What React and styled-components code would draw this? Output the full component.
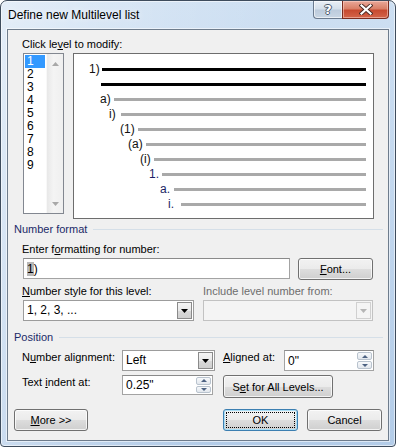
import React from 'react';
import styled, { createGlobalStyle } from 'styled-components';

const levels = [
  { label: '1)', indent: 15, width: 13, dark: true },
  { label: '', indent: 27, width: 0, dark: true },
  { label: 'a)', indent: 26, width: 14 },
  { label: 'i)', indent: 35, width: 12 },
  { label: '(1)', indent: 46, width: 18 },
  { label: '(a)', indent: 54, width: 18 },
  { label: '(i)', indent: 66, width: 14 },
  { label: '1.', indent: 75, width: 13, navy: true },
  { label: 'a.', indent: 86, width: 14, navy: true },
  { label: 'i.', indent: 94, width: 13, navy: true },
];

const ArrowDown = ({ color = '#000' }) => (
  <svg width="7" height="4" viewBox="0 0 7 4"><path d="M0 0h7L3.5 4z" fill={color} /></svg>
);
const ArrowUp = ({ color = '#000' }) => (
  <svg width="7" height="4" viewBox="0 0 7 4"><path d="M0 4h7L3.5 0z" fill={color} /></svg>
);

const Combo = ({ width, disabled, children }) => (
  <ComboBox $w={width} $disabled={disabled}>
    <ComboText>{children}</ComboText>
    <ComboButton $disabled={disabled}>
      <ArrowDown color={disabled ? '#b5b5b5' : '#000'} />
    </ComboButton>
  </ComboBox>
);

const Spin = ({ width, height, children }) => (
  <SpinBox $w={width} $h={height}>
    <FieldText>{children}</FieldText>
    <SpinButtons>
      <SpinButton><SmallArrow $up /></SpinButton>
      <SpinButton><SmallArrow /></SpinButton>
    </SpinButtons>
  </SpinBox>
);

export default function App() {
  return (
    <>
      <GlobalStyle />
      <Frame>
        <TitleBar>
          <Title>Define new Multilevel list</Title>
          <CaptionButtons>
            <HelpButton><HelpGlyph>?</HelpGlyph></HelpButton>
            <CloseButton>
              <svg width="14" height="11" viewBox="0 0 14 11">
                <path d="M2.5 1.5l9 8M11.5 1.5l-9 8" stroke="#4a2a24" strokeWidth="4" strokeLinecap="square" />
                <path d="M2.5 1.5l9 8M11.5 1.5l-9 8" stroke="#fff" strokeWidth="2.2" strokeLinecap="square" />
              </svg>
            </CloseButton>
          </CaptionButtons>
        </TitleBar>

        <Client>
          <Section $top={7}>
            <FieldLabel>Click le<u>v</u>el to modify:</FieldLabel>
            <TopRow>
              <LevelList>
                <LevelItems>
                  {[1, 2, 3, 4, 5, 6, 7, 8, 9].map((n) => (
                    <LevelItem key={n} $selected={n === 1}>{n}</LevelItem>
                  ))}
                </LevelItems>
                <ScrollTrack>
                  <ArrowUp color="#a8a8a8" />
                  <ArrowDown color="#a8a8a8" />
                </ScrollTrack>
              </LevelList>
              <Preview>
                {levels.map((l, i) => (
                  <PreviewRow key={i} $indent={l.indent}>
                    <PreviewLabel $w={l.width} $navy={l.navy}>{l.label}</PreviewLabel>
                    <PreviewLine $dark={l.dark} />
                  </PreviewRow>
                ))}
              </Preview>
            </TopRow>
          </Section>

          <GroupHeader $top={3}>Number format</GroupHeader>
          <Section $top={6}>
            <FieldLabel>Enter f<u>o</u>rmatting for number:</FieldLabel>
            <ControlRow $top={2} $gap={8}>
              <TextField $w={267}>
                <FieldText><Selected>1</Selected>)</FieldText>
              </TextField>
              <Button $w={75} $h={22}><u>F</u>ont...</Button>
            </ControlRow>
            <LabelRow $top={4}>
              <FieldLabel $w={181}><u>N</u>umber style for this level:</FieldLabel>
              <FieldLabel $disabled>Include level number from:</FieldLabel>
            </LabelRow>
            <ControlRow $top={2} $gap={9}>
              <Combo width={171}>1, 2, 3, ...</Combo>
              <Combo width={170} disabled />
            </ControlRow>
          </Section>

          <GroupHeader $top={9}>Position</GroupHeader>
          <Section $top={6}>
            <PositionRow>
              <FieldLabel $w={100}>N<u>u</u>mber alignment:</FieldLabel>
              <Combo width={93}>Left</Combo>
              <FieldLabel $w={61} $left={8}><u>A</u>ligned at:</FieldLabel>
              <Spin width={90} height={21}>0"</Spin>
            </PositionRow>
            <PositionRow $top={4}>
              <FieldLabel $w={100}>Text <u>i</u>ndent at:</FieldLabel>
              <Spin width={91} height={20}>0.25"</Spin>
              <Button $w={110} $h={23} $left={10}>S<u>e</u>t for All Levels...</Button>
            </PositionRow>
          </Section>

          <ButtonBar>
            <Button $w={74} $h={22}><u>M</u>ore &gt;&gt;</Button>
            <Spacer />
            <Button $w={75} $h={22} $default>
              <FocusRect>OK</FocusRect>
            </Button>
            <Button $w={75} $h={22} $left={9}>Cancel</Button>
          </ButtonBar>
        </Client>
      </Frame>
    </>
  );
}

const GlobalStyle = createGlobalStyle`
  html, body { margin:0; padding:0; background:#fff; }
  body { font-family:"Liberation Sans", Arial, sans-serif; font-size:11px; color:#000; }
  u { text-underline-offset:1px; }
`;

const Frame = styled.div`
  width:396px;
  height:447px;
  box-sizing:border-box;
  border:1px solid #3e4c5d;
  border-radius:7px 7px 4px 4px;
  background:
    linear-gradient(100deg, rgba(255,255,255,0.45) 0%, rgba(255,255,255,0.15) 35%, rgba(255,255,255,0) 60%),
    linear-gradient(180deg, #cddff2 0%, #c2d7ee 45%, #b3cce8 100%);
  box-shadow:inset 0 0 0 1px rgba(255,255,255,0.55);
  display:flex;
  flex-direction:column;
  overflow:hidden;
`;

const TitleBar = styled.div`
  height:28px;
  flex-shrink:0;
  display:flex;
  align-items:flex-start;
  padding-left:7px;
`;

const Title = styled.div`
  margin-top:6px;
  font-size:12px;
  line-height:16px;
  color:#000;
  text-shadow:0 0 6px rgba(255,255,255,0.9);
`;

const CaptionButtons = styled.div`
  margin-left:auto;
  margin-right:6px;
  display:flex;
`;

const HelpButton = styled.div`
  width:29px;
  height:18px;
  box-sizing:border-box;
  border:1px solid #6b7b8f;
  border-top:none;
  border-right:none;
  border-radius:0 0 0 4px;
  background:linear-gradient(180deg, #e9eff6 0%, #d4dfeb 48%, #bccbdc 52%, #c9d6e4 100%);
  box-shadow:inset 0 0 0 1px rgba(255,255,255,0.6);
  display:flex;
  align-items:center;
  justify-content:center;
`;

const HelpGlyph = styled.span`
  font-family:"DejaVu Sans", sans-serif;
  font-weight:bold;
  font-size:13px;
  line-height:13px;
  color:#fff;
  text-shadow:1px 0 0 #4b5a6c, -1px 0 0 #4b5a6c, 0 1px 0 #4b5a6c, 0 -1px 0 #4b5a6c;
`;

const CloseButton = styled.div`
  width:47px;
  height:18px;
  box-sizing:border-box;
  border:1px solid #7b2c1f;
  border-top:none;
  border-radius:0 0 4px 0;
  background:linear-gradient(180deg, #e9a899 0%, #d98068 45%, #c74a30 55%, #d4654a 100%);
  box-shadow:inset 0 0 0 1px rgba(255,220,210,0.5);
  display:flex;
  align-items:center;
  justify-content:center;
`;

const Client = styled.div`
  margin:0 6px;
  height:412px;
  box-sizing:border-box;
  border:1px solid #6e7c8c;
  background:#f0f0f0;
  box-shadow:0 0 0 1px rgba(255,255,255,0.55);
  display:flex;
  flex-direction:column;
`;

const Section = styled.div`
  margin-top:${(p) => p.$top || 0}px;
  padding-left:14px;
  display:flex;
  flex-direction:column;
`;

const FieldLabel = styled.div`
  width:${(p) => (p.$w ? `${p.$w}px` : 'auto')};
  margin-left:${(p) => p.$left || 0}px;
  flex-shrink:0;
  line-height:14px;
  height:14px;
  white-space:nowrap;
  color:${(p) => (p.$disabled ? '#6d6d6d' : '#000')};
`;

const TopRow = styled.div`
  margin-top:2px;
  margin-left:1px;
  display:flex;
  align-items:flex-start;
  gap:9px;
`;

const LevelList = styled.div`
  width:41px;
  height:161px;
  box-sizing:border-box;
  border:1px solid #828790;
  background:#fff;
  display:flex;
`;

const LevelItems = styled.div`
  width:20px;
  margin-left:1px;
  padding-top:1px;
  display:flex;
  flex-direction:column;
`;

const LevelItem = styled.div`
  height:13px;
  line-height:13px;
  padding-left:2px;
  font-size:12px;
  background:${(p) => (p.$selected ? '#3399ff' : 'transparent')};
  color:${(p) => (p.$selected ? '#fff' : '#000')};
`;

const ScrollTrack = styled.div`
  width:17px;
  margin-left:1px;
  box-sizing:border-box;
  background:linear-gradient(90deg, #e8e8e8 0%, #f4f4f4 40%, #efefef 100%);
  border-left:1px solid #f8f8f8;
  display:flex;
  flex-direction:column;
  align-items:center;
  justify-content:space-between;
  padding:8px 0 7px;
`;

const Preview = styled.div`
  width:301px;
  height:166px;
  box-sizing:border-box;
  border:1px solid #6d6d6d;
  background:#fff;
  padding:8px 7px 0 0;
  display:flex;
  flex-direction:column;
`;

const PreviewRow = styled.div`
  height:15px;
  padding-left:${(p) => p.$indent}px;
  display:flex;
  align-items:center;
`;

const PreviewLabel = styled.div`
  width:${(p) => p.$w}px;
  flex-shrink:0;
  font-size:12px;
  line-height:15px;
  white-space:nowrap;
  color:${(p) => (p.$navy ? '#1c1f66' : '#111')};
`;

const PreviewLine = styled.div`
  flex:1;
  height:3px;
  background:${(p) => (p.$dark ? '#000' : '#a9a9a9')};
`;

const GroupHeader = styled.div`
  margin:${(p) => p.$top || 0}px 5px 0 6px;
  height:14px;
  line-height:14px;
  color:#1b2a68;
  display:flex;
  align-items:center;
  gap:6px;
  white-space:nowrap;

  &::after {
    content:'';
    flex:1;
    height:1px;
    background:#d5dfe8;
  }
`;

const ControlRow = styled.div`
  margin-top:${(p) => p.$top || 0}px;
  margin-left:1px;
  display:flex;
  align-items:flex-start;
  gap:${(p) => p.$gap || 0}px;
`;

const LabelRow = styled.div`
  margin-top:${(p) => p.$top || 0}px;
  display:flex;
`;

const PositionRow = styled.div`
  margin-top:${(p) => p.$top || 0}px;
  display:flex;
  align-items:flex-start;
`;

const TextField = styled.div`
  width:${(p) => p.$w}px;
  height:21px;
  box-sizing:border-box;
  border:1px solid #a3a3a3;
  border-top-color:#8a8a8a;
  background:#fff;
  display:flex;
  align-items:center;
`;

const FieldText = styled.div`
  flex:1;
  padding-left:3px;
  font-size:12px;
  white-space:nowrap;
`;

const Selected = styled.span`
  background:#b8b8b8;
`;

const ComboBox = styled.div`
  width:${(p) => p.$w}px;
  height:21px;
  box-sizing:border-box;
  border:1px solid ${(p) => (p.$disabled ? '#c2c2c2' : '#9c9c9c')};
  background:${(p) => (p.$disabled ? '#f4f4f4' : '#fff')};
  display:flex;
  align-items:stretch;
  padding:1px;
`;

const ComboText = styled.div`
  flex:1;
  padding-left:2px;
  font-size:12px;
  line-height:17px;
  white-space:nowrap;
`;

const ComboButton = styled.div`
  width:15px;
  box-sizing:border-box;
  border:1px solid ${(p) => (p.$disabled ? '#d0d0d0' : '#8a8a8a')};
  background:${(p) => (p.$disabled
    ? '#f4f4f4'
    : 'linear-gradient(180deg, #f5f5f5 0%, #e9e9e9 50%, #d9d9d9 51%, #cfcfcf 100%)')};
  display:flex;
  align-items:center;
  justify-content:center;
`;

const SpinBox = styled.div`
  width:${(p) => p.$w}px;
  height:${(p) => p.$h}px;
  box-sizing:border-box;
  border:1px solid #a3a3a3;
  border-top-color:#8a8a8a;
  background:#fff;
  display:flex;
  align-items:center;
  margin-left:${(p) => p.$left || 0}px;
`;

const SpinButtons = styled.div`
  width:15px;
  align-self:stretch;
  padding:1px 1px 1px 0;
  display:flex;
  flex-direction:column;
  gap:1px;
`;

const SpinButton = styled.div`
  flex:1;
  box-sizing:border-box;
  border:1px solid #b9c3ce;
  border-radius:2px;
  background:linear-gradient(180deg, #f7f9fb 0%, #e2e7ed 100%);
  display:flex;
  align-items:center;
  justify-content:center;
`;

const SmallArrow = styled.span`
  width:0;
  height:0;
  border-left:3px solid transparent;
  border-right:3px solid transparent;
  ${(p) => (p.$up ? 'border-bottom:3px solid #4d6282;' : 'border-top:3px solid #4d6282;')}
`;

const Button = styled.div`
  width:${(p) => p.$w}px;
  height:${(p) => p.$h}px;
  margin-left:${(p) => p.$left || 0}px;
  box-sizing:border-box;
  flex-shrink:0;
  border:1px solid ${(p) => (p.$default ? '#3c7fb1' : '#707070')};
  border-radius:3px;
  background:linear-gradient(180deg, #f2f2f2 0%, #ebebeb 50%, #dddddd 51%, #cfcfcf 100%);
  box-shadow:inset 0 0 0 1px ${(p) => (p.$default ? '#a9def6' : 'rgba(255,255,255,0.75)')};
  display:flex;
  align-items:center;
  justify-content:center;
  font-size:11px;
  white-space:nowrap;
  padding:${(p) => (p.$default ? '2px' : '0')};
`;

const FocusRect = styled.div`
  align-self:stretch;
  flex:1;
  border:1px dotted #000;
  display:flex;
  align-items:center;
  justify-content:center;
`;

const ButtonBar = styled.div`
  margin:11px 6px 0 6px;
  display:flex;
  align-items:flex-start;
`;

const Spacer = styled.div`
  flex:1;
`;
